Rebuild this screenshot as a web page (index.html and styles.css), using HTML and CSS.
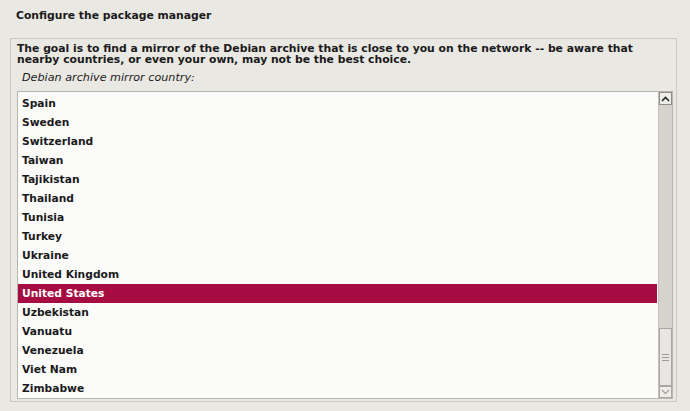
FILE: index.html
```html
<!DOCTYPE html>
<html>
<head>
<meta charset="utf-8">
<link rel="stylesheet" href="styles.css">
</head>
<body>
<div class="title">Configure the package manager</div>
<div class="panel">
  <div class="desc">The goal is to find a mirror of the Debian archive that is close to you on the network -- be aware that nearby countries, or even your own, may not be the best choice.</div>
  <div class="label">Debian archive mirror country:</div>
  <div class="list">
    <div class="rows">
      <div class="row">Spain</div>
      <div class="row">Sweden</div>
      <div class="row">Switzerland</div>
      <div class="row">Taiwan</div>
      <div class="row">Tajikistan</div>
      <div class="row">Thailand</div>
      <div class="row">Tunisia</div>
      <div class="row">Turkey</div>
      <div class="row">Ukraine</div>
      <div class="row">United Kingdom</div>
      <div class="row selected">United States</div>
      <div class="row">Uzbekistan</div>
      <div class="row">Vanuatu</div>
      <div class="row">Venezuela</div>
      <div class="row">Viet Nam</div>
      <div class="row">Zimbabwe</div>
    </div>
    <div class="scrollbar">
      <div class="btn up"><svg width="9" height="6" viewBox="0 0 9 6"><path d="M1 5 L4.5 1.5 L8 5" fill="none" stroke="#2a2a2a" stroke-width="1.6"/></svg></div>
      <div class="trough"></div>
      <div class="thumb"><span class="grip"></span><span class="grip"></span><span class="grip"></span></div>
      <div class="btn down"><svg width="9" height="6" viewBox="0 0 9 6"><path d="M1 1 L4.5 4.5 L8 1" fill="none" stroke="#a9a7a2" stroke-width="1.4"/></svg></div>
    </div>
  </div>
</div>
</body>
</html>
```
FILE: styles.css
```css
html, body {
  margin: 0;
  padding: 0;
}
body {
  width: 690px;
  height: 411px;
  background: #e9e8e3;
  font-family: "DejaVu Sans", sans-serif;
  color: #1a1a1a;
  overflow: hidden;
}
.title {
  font-weight: bold;
  font-size: 10.8px;
  line-height: 13px;
  padding: 9px 0 0 16px;
  height: 16px;
}
.panel {
  margin: 13px 0 0 10px;
  width: 667px;
  height: 364px;
  border: 1px solid #cac7c0;
  box-sizing: border-box;
  padding: 4px 0 0 6px;
}
.desc {
  font-weight: bold;
  font-size: 10.8px;
  line-height: 11px;
  width: 632px;
}
.label {
  font-style: italic;
  font-size: 11.2px;
  line-height: 12px;
  margin-top: 7px;
  padding-left: 5px;
  color: #222;
}
.list {
  margin-top: 7px;
  width: 656px;
  height: 308px;
  border: 1px solid #b9b6af;
  box-sizing: border-box;
  display: flex;
  background: #fbfbfa;
}
.rows {
  flex: 1;
  padding-top: 2px;
}
.row {
  height: 19px;
  line-height: 19px;
  font-weight: bold;
  font-size: 10.7px;
  padding-left: 4px;
  margin-right: 1px;
}
.row.selected {
  background: #a60c41;
  color: #ffffff;
}
.scrollbar {
  width: 14px;
  display: flex;
  flex-direction: column;
  background: #d6d3cd;
  border-left: 1px solid #c5c2bb;
  box-sizing: border-box;
}
.btn {
  height: 13px;
  background: #eeede9;
  border: 1px solid #8f8d88;
  box-sizing: border-box;
  display: flex;
  align-items: center;
  justify-content: center;
}
.btn.down {
  height: 12px;
  border-color: #a8a6a1;
}
.trough {
  flex: 1;
}
.thumb {
  height: 58px;
  background: #e8e6e2;
  border: 1px solid #a9a7a2;
  box-sizing: border-box;
  display: flex;
  flex-direction: column;
  align-items: center;
  justify-content: center;
  gap: 2px;
}
.grip {
  width: 7px;
  height: 1px;
  background: #9c9a95;
}
```
